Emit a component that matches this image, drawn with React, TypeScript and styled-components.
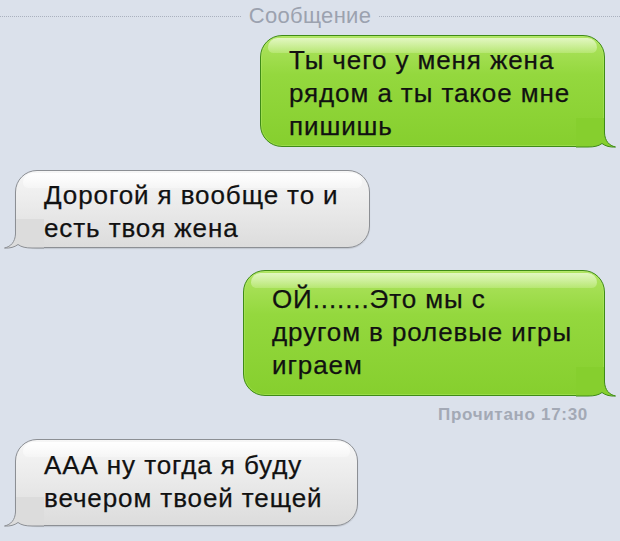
import React from 'react'
import styled, { createGlobalStyle, css } from 'styled-components'

const GlobalStyle = createGlobalStyle`
  html, body {
    margin: 0;
    padding: 0;
    background: #dbe1eb;
  }
  * {
    box-sizing: border-box;
  }
`

const Screen = styled.div`
  width: 620px;
  height: 541px;
  overflow: hidden;
  background: #dbe1eb;
  font-family: 'Liberation Sans', Arial, sans-serif;
  display: flex;
  flex-direction: column;
`

const Header = styled.div`
  height: 32px;
  display: flex;
  align-items: center;
  gap: 8px;
`

const Dots = styled.div`
  flex: 1;
  border-top: 1px dotted #aab1be;
`

const Title = styled.span`
  font-size: 22px;
  letter-spacing: 0.3px;
  color: #9ba2af;
`

type Side = 'out' | 'in'

const Bubble = styled.div<{ $side: Side; $w: number; $h: number; $top: number; $pt: number }>`
  position: relative;
  width: ${(p) => p.$w}px;
  height: ${(p) => p.$h}px;
  margin-top: ${(p) => p.$top}px;
  padding: ${(p) => p.$pt}px 10px 0 28px;
  border-radius: 22px;
  font-size: 26px;
  letter-spacing: 0.9px;
  line-height: 33px;
  color: #111;
  -webkit-text-stroke: 0.25px #111;
  white-space: nowrap;
  ${(p) =>
    p.$side === 'out'
      ? css`
          align-self: flex-end;
          margin-right: 15px;
          border: 1px solid #3f8b17;
          background: linear-gradient(#b0e462 0%, #94d83e 35%, #86cf2e 100%);
          box-shadow: inset 0 0 0 1px rgba(190, 240, 120, 0.35);
        `
      : css`
          align-self: flex-start;
          margin-left: 15px;
          border: 1px solid #8c8f94;
          background: linear-gradient(#f6f6f6 0%, #ececec 40%, #dcdcdc 100%);
          box-shadow: 0 1px 1px rgba(0, 0, 0, 0.12);
        `}

  &::before {
    content: '';
    position: absolute;
    top: 2px;
    left: 7px;
    right: 7px;
    height: 15px;
    border-radius: 14px 14px 8px 8px;
    background: ${(p) =>
      p.$side === 'out'
        ? 'linear-gradient(rgba(235, 250, 210, 0.85), rgba(215, 245, 170, 0.35))'
        : 'linear-gradient(rgba(255, 255, 255, 0.95), rgba(255, 255, 255, 0.3))'};
  }
`

const Text = styled.div`
  position: relative;
`

const TailSvg = styled.svg<{ $side: Side }>`
  position: absolute;
  bottom: -2px;
  ${(p) =>
    p.$side === 'out'
      ? css`
          right: -12px;
        `
      : css`
          left: -12px;
          transform: scaleX(-1);
        `}
`

const Receipt = styled.div`
  align-self: flex-end;
  margin: 9px 32px 0 0;
  font-size: 17px;
  letter-spacing: 0.7px;
  line-height: 20px;
  font-weight: bold;
  color: #a3a9b5;
`

// the curled tail at the bottom corner of a bubble
const Tail = ({ side }: { side: Side }) => {
  const fill = side === 'out' ? '#86cf2e' : '#dcdcdc'
  const stroke = side === 'out' ? '#3f8b17' : '#8c8f94'
  return (
    <TailSvg $side={side} width="40" height="30" viewBox="0 0 40 30">
      <path
        d="M0 0 L28.5 0 L28.5 15 C29 23 33 27.5 39.5 29 C34 29.4 29.5 28.2 26 25.5 C22.5 28.2 18 29 12 29 L0 29 Z"
        fill={fill}
      />
      <path
        d="M28.5 0 L28.5 15 C29 23 33 27.5 39.5 29 C34 29.4 29.5 28.2 26 25.5 C22.5 28.2 18 29 12 29 L0 29"
        fill="none"
        stroke={stroke}
        strokeWidth="1"
      />
    </TailSvg>
  )
}

type Msg = { side: Side; w: number; h: number; top: number; pt: number; lines: string[] }

const first: Msg[] = [
  { side: 'out', w: 345, h: 112, top: 3, pt: 8, lines: ['Ты чего у меня жена', 'рядом а ты такое мне', 'пишишь'] },
  { side: 'in', w: 355, h: 78, top: 23, pt: 8, lines: ['Дорогой я вообще то и', 'есть твоя жена'] },
  { side: 'out', w: 362, h: 126, top: 22, pt: 12, lines: ['ОЙ.......Это мы с', 'другом в ролевые игры', 'играем'] },
]

const last: Msg = { side: 'in', w: 343, h: 87, top: 14, pt: 9, lines: ['ААА ну тогда я буду', 'вечером твоей тещей'] }

const Message = ({ m }: { m: Msg }) => (
  <Bubble $side={m.side} $w={m.w} $h={m.h} $top={m.top} $pt={m.pt}>
    <Tail side={m.side} />
    <Text>
      {m.lines.map((l, i) => (
        <div key={i}>{l}</div>
      ))}
    </Text>
  </Bubble>
)

export default function App() {
  return (
    <>
      <GlobalStyle />
      <Screen>
        <Header>
          <Dots />
          <Title>Сообщение</Title>
          <Dots />
        </Header>
        {first.map((m, i) => (
          <Message key={i} m={m} />
        ))}
        <Receipt>Прочитано 17:30</Receipt>
        <Message m={last} />
      </Screen>
    </>
  )
}
